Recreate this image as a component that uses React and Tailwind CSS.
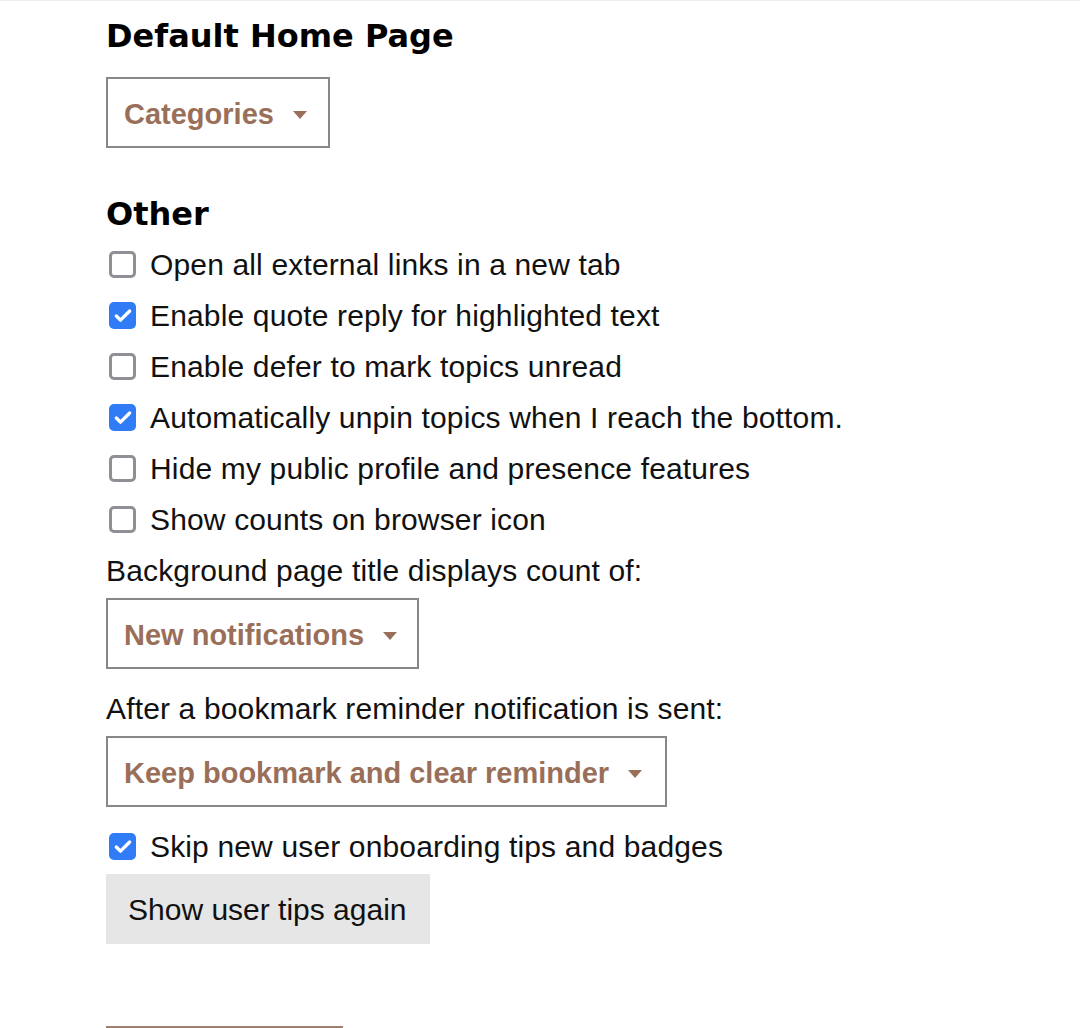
import { Check } from 'lucide-react';

const checks = [
  { label: "Open all external links in a new tab", checked: false },
  { label: "Enable quote reply for highlighted text", checked: true },
  { label: "Enable defer to mark topics unread", checked: false },
  { label: "Automatically unpin topics when I reach the bottom.", checked: true },
  { label: "Hide my public profile and presence features", checked: false },
  { label: "Show counts on browser icon", checked: false },
];

function Caret() {
  return (
    <svg width="14" height="8" viewBox="0 0 14 8" className="flex-shrink-0">
      <path d="M0 0 L14 0 L7 8 Z" fill="#9a6f5a" />
    </svg>
  );
}

function Select({ label, width }) {
  return (
    <div className={`h-[71px] ${width} border-2 border-[#888888] flex items-center pt-[4px] pl-4 pr-[22px] gap-[19px]`}>
      <span className="text-[29px] font-bold text-[#9a6f5a] whitespace-nowrap">{label}</span>
      <Caret />
    </div>
  );
}

function CheckRow({ label, checked }) {
  return (
    <label className="h-[51px] flex items-center gap-[14px] pl-[3px]">
      {checked ? (
        <span className="w-[27px] h-[27px] rounded-[5px] bg-[#2f7cf6] flex items-center justify-center">
          <Check size={20} strokeWidth={4} color="#ffffff" />
        </span>
      ) : (
        <span className="w-[27px] h-[27px] rounded-[5px] border-[3px] border-[#8f8f95] bg-white" />
      )}
      <span className="text-[30px] text-[#111111] whitespace-nowrap tracking-[0.15px]">{label}</span>
    </label>
  );
}

export default function App() {
  return (
    <div className="min-h-[1028px] bg-white border-t border-[#eeeeee] pl-[106px] font-['Liberation_Sans',Arial,sans-serif] overflow-hidden">
      <h1 className="mt-[15px] h-[40px] flex items-center text-[32px] font-bold text-black font-['DejaVu_Sans',sans-serif]">
        Default Home Page
      </h1>
      <div className="mt-[21px] flex">
        <Select label="Categories" width="w-[224px]" />
      </div>

      <h2 className="mt-[46px] h-[40px] flex items-center text-[32px] font-bold text-black font-['DejaVu_Sans',sans-serif]">
        Other
      </h2>
      <div className="mt-[5px] flex flex-col">
        {checks.map((c) => (
          <CheckRow key={c.label} label={c.label} checked={c.checked} />
        ))}
        <div className="h-[51px] flex items-center text-[30px] text-[#111111] tracking-[0.15px]">
          Background page title displays count of:
        </div>
      </div>
      <div className="mt-[2px] flex">
        <Select label="New notifications" width="w-[313px]" />
      </div>

      <div className="mt-[14px] h-[51px] flex items-center text-[30px] text-[#111111] tracking-[0.15px]">
        After a bookmark reminder notification is sent:
      </div>
      <div className="mt-[2px] flex">
        <Select label="Keep bookmark and clear reminder" width="w-[561px]" />
      </div>

      <div className="mt-[14px]">
        <CheckRow label="Skip new user onboarding tips and badges" checked={true} />
      </div>
      <button className="mt-[2px] h-[70px] w-[324px] bg-[#e6e6e6] text-[30px] text-[#111111] text-left pl-[22px]">
        Show user tips again
      </button>

      <div className="mt-[82px] w-[237px] h-[2px] bg-[#9c8070]" />
    </div>
  );
}
